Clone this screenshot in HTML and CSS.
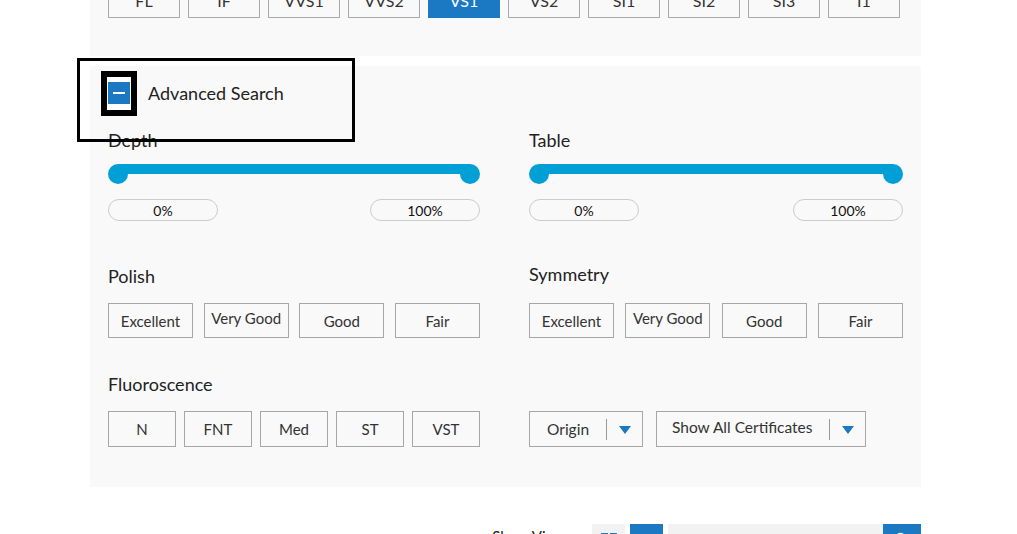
FILE: index.html
```html
<!DOCTYPE html>
<html lang="en">
<head>
<meta charset="utf-8">
<title>Advanced Search</title>
<link rel="stylesheet" href="styles.css">
</head>
<body>
<div class="page">
  <section class="panel panel-top">
    <div class="clarity">
      <span class="chip">FL</span>
      <span class="chip">IF</span>
      <span class="chip">VVS1</span>
      <span class="chip">VVS2</span>
      <span class="chip chip-active">VS1</span>
      <span class="chip">VS2</span>
      <span class="chip">SI1</span>
      <span class="chip">SI2</span>
      <span class="chip">SI3</span>
      <span class="chip">I1</span>
    </div>
  </section>

  <section class="panel panel-adv">
    <div class="adv-header">
      <span class="cb"><span class="cb-dash"></span></span>
      <span class="adv-title">Advanced Search</span>
    </div>

    <div class="adv-grid">
      <div class="field">
        <div class="label">Depth</div>
        <div class="slider">
          <div class="track"></div>
          <span class="knob knob-l"></span>
          <span class="knob knob-r"></span>
        </div>
        <div class="range-vals"><span class="pill">0%</span><span class="pill">100%</span></div>
      </div>
      <div class="field">
        <div class="label">Table</div>
        <div class="slider">
          <div class="track"></div>
          <span class="knob knob-l"></span>
          <span class="knob knob-r"></span>
        </div>
        <div class="range-vals"><span class="pill">0%</span><span class="pill">100%</span></div>
      </div>

      <div class="field row2">
        <div class="label">Polish</div>
        <div class="opts4">
          <span class="opt">Excellent</span>
          <span class="opt opt-up">Very Good</span>
          <span class="opt">Good</span>
          <span class="opt">Fair</span>
        </div>
      </div>
      <div class="field row2">
        <div class="label label-sym">Symmetry</div>
        <div class="opts4">
          <span class="opt">Excellent</span>
          <span class="opt opt-up">Very Good</span>
          <span class="opt">Good</span>
          <span class="opt">Fair</span>
        </div>
      </div>

      <div class="field row3">
        <div class="label">Fluoroscence</div>
        <div class="opts5">
          <span class="opt opt-sm">N</span>
          <span class="opt opt-sm">FNT</span>
          <span class="opt opt-sm">Med</span>
          <span class="opt opt-sm">ST</span>
          <span class="opt opt-sm">VST</span>
        </div>
      </div>
      <div class="field row3 selects">
        <div class="select select-origin">
          <span class="select-text">Origin</span>
          <span class="select-sep"></span>
          <span class="caret"></span>
        </div>
        <div class="select select-cert">
          <span class="select-text select-text-up">Show All Certificates</span>
          <span class="select-sep"></span>
          <span class="caret"></span>
        </div>
      </div>
    </div>
  </section>

  <div class="toolbar">
    <span class="tb-label">Show View:</span>
    <span class="tb-btn tb-grid">
      <svg width="16" height="14" viewBox="0 0 16 14"><rect x="0" y="0" width="7" height="6" fill="#1b79c4"/><rect x="9" y="0" width="7" height="6" fill="#1b79c4"/><rect x="0" y="8" width="7" height="6" fill="#1b79c4"/><rect x="9" y="8" width="7" height="6" fill="#1b79c4"/></svg>
    </span>
    <span class="tb-btn tb-list">
      <svg width="16" height="14" viewBox="0 0 16 14"><rect x="0" y="0" width="16" height="3" fill="#fff"/><rect x="0" y="5.5" width="16" height="3" fill="#fff"/><rect x="0" y="11" width="16" height="3" fill="#fff"/></svg>
    </span>
    <span class="tb-input"></span>
    <span class="tb-search">
      <svg width="16" height="16" viewBox="0 0 16 16"><circle cx="6.5" cy="6.5" r="4.8" fill="none" stroke="#fff" stroke-width="2"/><path d="M10 10 L14.5 14.5" stroke="#fff" stroke-width="2.4" stroke-linecap="round"/></svg>
    </span>
  </div>
</div>
</body>
</html>
```

FILE: styles.css
```css
* { box-sizing: border-box; }

html, body {
  margin: 0;
  padding: 0;
  background: #ffffff;
}

body {
  font-family: Lato, "Open Sans", "Liberation Sans", sans-serif;
  color: #222222;
  overflow: hidden;
}

.page {
  width: 831px;
  margin-left: 90px;
}

.panel {
  background: #f9f9f9;
}

/* top (clarity) panel, scrolled partly out of view */
.panel-top {
  margin-top: -36px;
  padding: 18px 18px 38px;
}

.clarity {
  display: flex;
  gap: 8px;
}

.chip {
  width: 72px;
  height: 36px;
  border: 1px solid #a8a8a8;
  display: flex;
  align-items: center;
  justify-content: center;
  font-size: 16px;
  color: #333333;
}

.chip-active {
  background: #1b79c4;
  border-color: #1b79c4;
  color: #ffffff;
}

/* advanced panel */
.panel-adv {
  margin-top: 10px;
  padding: 0 18px 40px;
  display: flex;
  flex-direction: column;
}

.adv-header {
  align-self: flex-start;
  width: 272px;
  height: 78px;
  margin: -5px 0 -10px -28px;
  padding: 16px 0 0 27px;
  outline: 3px solid #000000;
  display: flex;
  align-items: flex-start;
  position: relative;
  z-index: 1;
}

.cb {
  width: 24px;
  height: 33px;
  background: #1b79c4;
  border-style: solid;
  border-color: #ffffff;
  border-width: 5px 1px 6px;
  outline: 6px solid #000000;
  display: flex;
  align-items: center;
  justify-content: center;
}

.cb-dash {
  width: 12px;
  height: 2px;
  background: #ffffff;
}

.adv-title {
  margin: 5px 0 0 17px;
  font-size: 18px;
  line-height: 22px;
  color: #222222;
}

.adv-grid {
  display: grid;
  grid-template-columns: 372px 374px;
  column-gap: 49px;
}

.label {
  font-size: 18px;
  line-height: 22px;
  color: #222222;
}

.label-sym {
  line-height: 18px;
  padding-bottom: 4px;
}

.slider {
  position: relative;
  height: 20px;
  margin-top: 13px;
}

.track {
  height: 10px;
  margin: 5px 10px 0;
  background: #00a0d6;
}

.knob {
  position: absolute;
  top: 0;
  width: 20px;
  height: 20px;
  border-radius: 50%;
  background: #00a0d6;
}

.knob-l { left: 0; }
.knob-r { right: 0; }

.range-vals {
  display: flex;
  justify-content: space-between;
  margin-top: 15px;
}

.pill {
  width: 110px;
  height: 22px;
  border: 1px solid #cccccc;
  border-radius: 11px;
  display: flex;
  align-items: center;
  justify-content: center;
  font-size: 14px;
  color: #111111;
}

.row2 { margin-top: 44px; }
.row3 { margin-top: 35px; }

.opts4 {
  display: flex;
  justify-content: space-between;
  margin-top: 16px;
}

.opt {
  width: 85px;
  height: 35px;
  border: 1px solid #a6a6a6;
  display: flex;
  align-items: center;
  justify-content: center;
  font-size: 15px;
  color: #333333;
}

.opt-up { padding-bottom: 5px; }

.opts5 {
  display: flex;
  gap: 8px;
  margin-top: 16px;
}

.opt-sm {
  width: 68px;
  height: 36px;
}

.selects {
  display: flex;
  align-self: end;
  gap: 13px;
}

.select {
  height: 36px;
  border: 1px solid #a6a6a6;
  display: flex;
  align-items: center;
  font-size: 15.5px;
  color: #333333;
}

.select-origin { width: 114px; padding-left: 17px; }
.select-cert { width: 210px; padding-left: 15px; }

.select-text { flex: 1; }
.select-text-up { padding-bottom: 4px; }

.select-sep {
  width: 1px;
  height: 21px;
  background: #999999;
}

.caret {
  width: 0;
  height: 0;
  margin: 2px 11px 0 12px;
  border-left: 6px solid transparent;
  border-right: 6px solid transparent;
  border-top: 8px solid #1b79c4;
}

/* bottom toolbar */
.toolbar {
  margin-top: 37px;
  display: flex;
  justify-content: flex-end;
  align-items: flex-start;
  height: 36px;
}

.tb-label {
  font-size: 15px;
  line-height: 20px;
  margin-top: 2px;
  margin-right: 23px;
  color: #222222;
}

.tb-btn {
  width: 33px;
  height: 36px;
  display: flex;
  align-items: flex-start;
  justify-content: center;
  padding-top: 9px;
  margin-right: 5px;
}

.tb-grid { background: #f2f2f2; }
.tb-list { background: #1b79c4; padding-top: 12px; }

.tb-input {
  width: 215px;
  height: 36px;
  background: #f2f2f2;
}

.tb-search {
  width: 38px;
  height: 36px;
  background: #1b79c4;
  display: flex;
  align-items: flex-start;
  justify-content: center;
  padding-top: 8px;
}
```
